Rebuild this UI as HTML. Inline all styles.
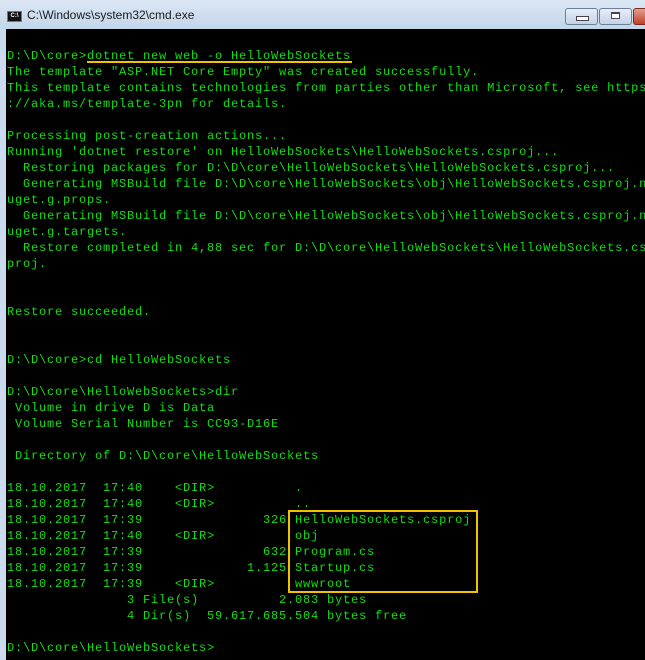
<!DOCTYPE html>
<html><head><meta charset="utf-8"><style>
html,body{margin:0;padding:0;width:645px;height:660px;overflow:hidden;background:#c9dbec;}
#title{position:absolute;left:0;top:0;width:645px;height:29px;background:linear-gradient(#dbe7f4,#c2d6ea);}
#title .t{position:absolute;left:27px;top:8px;font:12px "Liberation Sans",sans-serif;color:#1a1a1a;}
#icon{position:absolute;left:7px;top:11px;width:15px;height:11px;background:#111;border:1px solid #777;box-sizing:border-box;color:#fff;font:bold 6px "Liberation Sans",sans-serif;line-height:9px;text-align:center;}
.btn{position:absolute;top:8px;height:17px;border:1px solid #6d7f96;border-radius:3px;box-sizing:border-box;background:linear-gradient(#e6eef8,#c3d3e6);}
#con{position:absolute;left:6px;top:29px;width:639px;height:631px;background:#000;}
pre{position:absolute;left:7px;top:48px;margin:0;font-family:"Liberation Mono",monospace;font-size:12px;letter-spacing:0.8px;line-height:16px;color:#10e010;white-space:pre;}
</style></head><body>
<div id="title"><div id="icon">C:\</div><div class="t">C:\Windows\system32\cmd.exe</div>
<div class="btn" style="left:565px;width:33px"><div style="position:absolute;left:10px;top:7px;width:11px;height:3px;border:1px solid #445;background:#fff"></div></div>
<div class="btn" style="left:599px;width:33px"><div style="position:absolute;left:11px;top:3px;width:9px;height:7px;border:1px solid #445;background:#fff;box-sizing:border-box;border-top-width:2px"></div></div>
<div class="btn" style="left:633px;width:20px;background:linear-gradient(#e0a090,#c0402a);border-color:#7a2a20"></div>
</div>
<div id="con"></div>
<pre>D:\D\core&gt;dotnet new web -o HelloWebSockets
The template "ASP.NET Core Empty" was created successfully.
This template contains technologies from parties other than Microsoft, see https
://aka.ms/template-3pn for details.

Processing post-creation actions...
Running 'dotnet restore' on HelloWebSockets\HelloWebSockets.csproj...
  Restoring packages for D:\D\core\HelloWebSockets\HelloWebSockets.csproj...
  Generating MSBuild file D:\D\core\HelloWebSockets\obj\HelloWebSockets.csproj.n
uget.g.props.
  Generating MSBuild file D:\D\core\HelloWebSockets\obj\HelloWebSockets.csproj.n
uget.g.targets.
  Restore completed in 4,88 sec for D:\D\core\HelloWebSockets\HelloWebSockets.cs
proj.


Restore succeeded.


D:\D\core&gt;cd HelloWebSockets

D:\D\core\HelloWebSockets&gt;dir
 Volume in drive D is Data
 Volume Serial Number is CC93-D16E

 Directory of D:\D\core\HelloWebSockets

18.10.2017  17:40    &lt;DIR&gt;          .
18.10.2017  17:40    &lt;DIR&gt;          ..
18.10.2017  17:39               326 HelloWebSockets.csproj
18.10.2017  17:40    &lt;DIR&gt;          obj
18.10.2017  17:39               632 Program.cs
18.10.2017  17:39             1.125 Startup.cs
18.10.2017  17:39    &lt;DIR&gt;          wwwroot
               3 File(s)          2.083 bytes
               4 Dir(s)  59.617.685.504 bytes free

D:\D\core\HelloWebSockets&gt;</pre>
<div style="position:absolute;left:87px;top:61px;width:265px;height:2px;background:#f2c200"></div>
<div style="position:absolute;left:288px;top:510px;width:190px;height:83px;border:2px solid #f2c200;box-sizing:border-box"></div>
</body></html>
